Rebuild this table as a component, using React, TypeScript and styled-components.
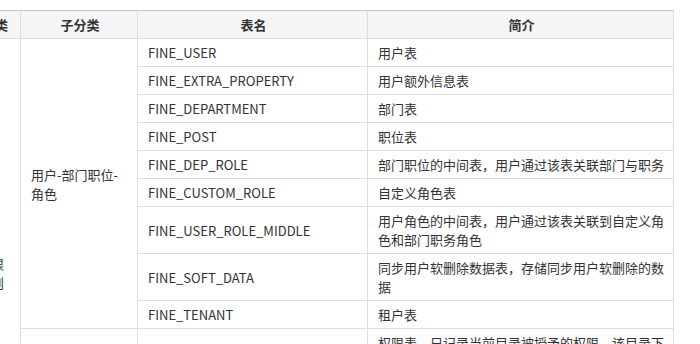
import React, { useLayoutEffect, useRef } from "react";
import styled, { createGlobalStyle } from "styled-components";

const Global = createGlobalStyle`
  html, body { margin: 0; padding: 0; background: #ffffff; }
  body { font-family: "Noto Sans CJK SC", "Noto Sans", sans-serif; }
`;

const Page = styled.div`
  padding-top: 10px;
  width: 700px;
`;

const ScrollBox = styled.div`
  width: 674px;
  overflow-x: auto;
  scrollbar-width: none;
  &::-webkit-scrollbar { display: none; }
`;

const Table = styled.table`
  border-collapse: collapse;
  table-layout: fixed;
  width: 706px;
  font-size: 13px;
  line-height: 19px;
  color: #333333;
`;

const HeadCell = styled.th`
  background: #f5f5f5;
  border: 1px solid #dddddd;
  border-top: 1px solid #c6c6c6;
  padding: 4px 8px 4px 10px;
  font-weight: bold;
  text-align: center;
  color: #333333;
`;

const Cell = styled.td`
  border: 1px solid #dddddd;
  padding: 4px 8px 4px 10px;
  vertical-align: middle;
  text-align: left;
  word-break: break-all;
`;

type Group = { sub: string; rows: [string, string][] };

const groups: Group[] = [
  {
    sub: "用户-部门职位-角色",
    rows: [
      ["FINE_USER", "用户表"],
      ["FINE_EXTRA_PROPERTY", "用户额外信息表"],
      ["FINE_DEPARTMENT", "部门表"],
      ["FINE_POST", "职位表"],
      ["FINE_DEP_ROLE", "部门职位的中间表，用户通过该表关联部门与职务"],
      ["FINE_CUSTOM_ROLE", "自定义角色表"],
      ["FINE_USER_ROLE_MIDDLE", "用户角色的中间表，用户通过该表关联到自定义角色和部门职务角色"],
      ["FINE_SOFT_DATA", "同步用户软删除数据表，存储同步用户软删除的数据"],
      ["FINE_TENANT", "租户表"],
    ],
  },
  {
    sub: "权限",
    rows: [
      [
        "FINE_AUTHORITY",
        "权限表，只记录当前目录被授予的权限，该目录下未被授予的权限不会记录，子目录的权限将单独记录，权限可继承自上级目录的设置",
      ],
      ["FINE_AUTHORITY_OBJECT", "权限对象表"],
      ["FINE_AUTH_PREFERENCE", "权限偏好设置表"],
      ["FINE_AUTH_TEMPLATE", "权限模板表"],
      ["FINE_AUTH_EXTRA", "权限额外信息表"],
    ],
  },
];

const totalRows = groups.reduce((n, g) => n + g.rows.length, 0);

export default function App() {
  const boxRef = useRef<HTMLDivElement>(null);
  useLayoutEffect(() => {
    if (boxRef.current) boxRef.current.scrollLeft = 33;
  }, []);

  return (
    <Page>
      <Global />
      <ScrollBox ref={boxRef}>
        <Table>
          <colgroup>
            <col style={{ width: 53 }} />
            <col style={{ width: 117 }} />
            <col style={{ width: 230 }} />
            <col style={{ width: 306 }} />
          </colgroup>
          <thead>
            <tr>
              <HeadCell>分类</HeadCell>
              <HeadCell>子分类</HeadCell>
              <HeadCell>表名</HeadCell>
              <HeadCell>简介</HeadCell>
            </tr>
          </thead>
          <tbody>
            {groups.map((g, gi) =>
              g.rows.map(([name, desc], ri) => (
                <tr key={`${gi}-${ri}`}>
                  {gi === 0 && ri === 0 && <Cell rowSpan={totalRows}>权限规则</Cell>}
                  {ri === 0 && <Cell rowSpan={g.rows.length}>{g.sub}</Cell>}
                  <Cell>{name}</Cell>
                  <Cell>{desc}</Cell>
                </tr>
              ))
            )}
          </tbody>
        </Table>
      </ScrollBox>
    </Page>
  );
}
